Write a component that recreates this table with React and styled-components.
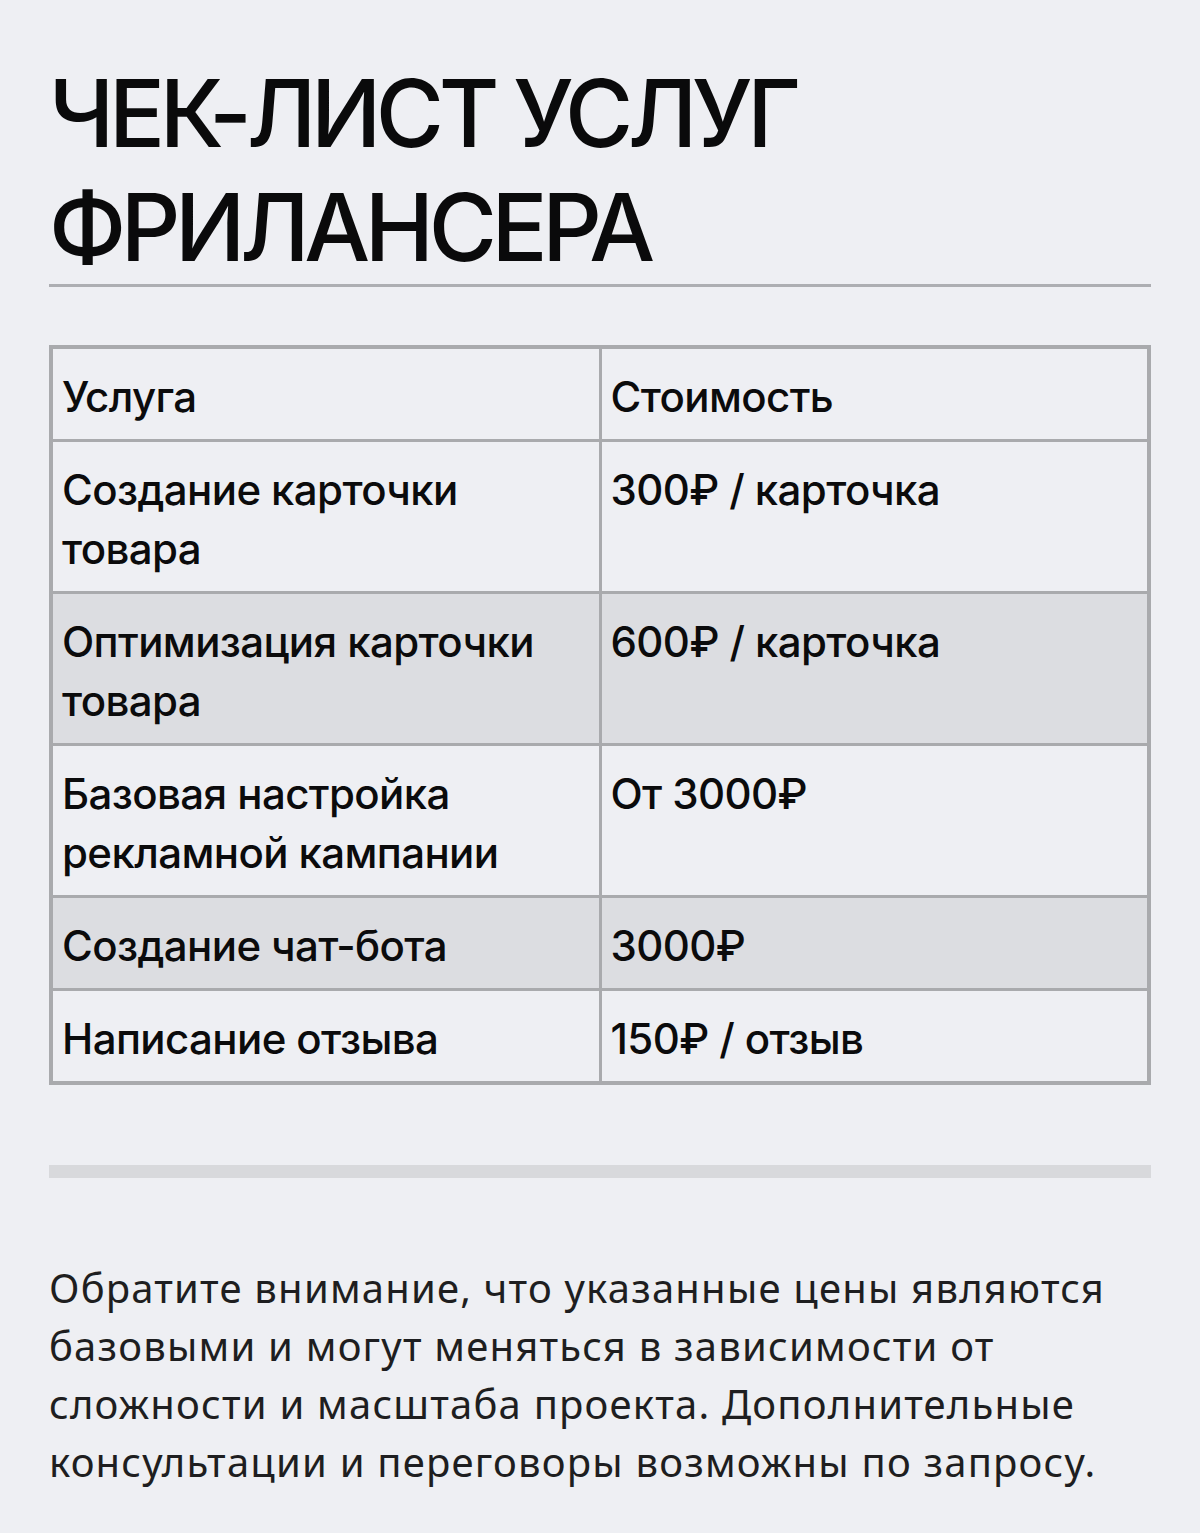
import React from 'react';
import styled, { createGlobalStyle } from 'styled-components';

const GlobalStyle = createGlobalStyle`
  html, body {
    margin: 0;
    padding: 0;
    background: #eeeff3;
  }
  body {
    font-family: Inter, "Noto Sans", sans-serif;
    color: #0b0b0c;
  }
`;

const Page = styled.div`
  padding: 56px 49px 60px;
  min-height: 1533px;
  box-sizing: border-box;
`;

const Title = styled.h1`
  margin: 0;
  font-family: Inter, "Noto Sans", sans-serif;
  font-weight: 500;
  font-size: 93px;
  line-height: 114px;
  letter-spacing: -5.4px;
  text-transform: uppercase;
  color: #0a0a0b;
  border-bottom: 3px solid #adaeb2;
`;

const PriceTable = styled.table`
  width: 100%;
  margin-top: 58px;
  border-collapse: collapse;
  border: 4px solid #a9aaad;
  table-layout: fixed;
`;

const Row = styled.tr`
  background: ${p => (p.$shaded ? '#dcdde1' : 'transparent')};
`;

const Cell = styled.td`
  width: 50%;
  padding: 18px 9px 13px;
  border: 3px solid #a9aaad;
  vertical-align: top;
  font-family: Inter, "Noto Sans", sans-serif;
  font-weight: 500;
  font-size: 42px;
  line-height: 59px;
  letter-spacing: -0.6px;
  color: #0b0b0c;
`;

const Divider = styled.div`
  height: 13px;
  margin-top: 80px;
  background: #d8d9dc;
`;

const Note = styled.p`
  margin: 81px 0 0;
  font-family: "Noto Sans", "Open Sans", sans-serif;
  font-weight: 400;
  font-size: 40px;
  line-height: 58px;
  letter-spacing: 1.2px;
  color: #1e1e20;
`;

const rows = [
  ['Услуга', 'Стоимость'],
  ['Создание карточки товара', '300₽ / карточка'],
  ['Оптимизация карточки товара', '600₽ / карточка'],
  ['Базовая настройка рекламной кампании', 'От 3000₽'],
  ['Создание чат-бота', '3000₽'],
  ['Написание отзыва', '150₽ / отзыв']
];

const App = () => (
  <>
    <GlobalStyle />
    <Page>
      <Title>
        Чек-лист услуг
        <br />
        фрилансера
      </Title>
      <PriceTable>
        <tbody>
          {rows.map(([service, price], i) => (
            <Row key={service} $shaded={i === 2 || i === 4}>
              <Cell>{service}</Cell>
              <Cell>{price}</Cell>
            </Row>
          ))}
        </tbody>
      </PriceTable>
      <Divider />
      <Note>
        Обратите внимание, что указанные цены являются базовыми и могут
        меняться в зависимости от сложности и масштаба проекта.
        Дополнительные консультации и переговоры возможны по запросу.
      </Note>
    </Page>
  </>
);

export default App;
